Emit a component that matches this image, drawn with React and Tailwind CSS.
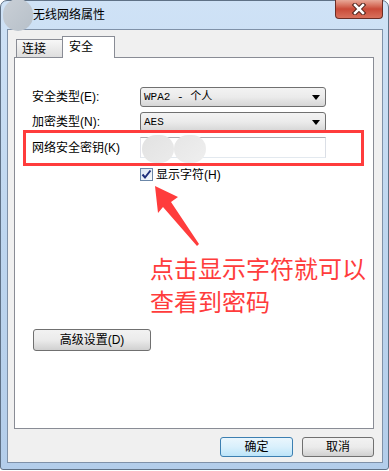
import React from "react";

const Combo = ({ value }) => (
  <div className="h-[20px] w-[186px] rounded-[3px] border border-[#707070] bg-gradient-to-b from-[#f3f3f3] via-[#ebebeb] to-[#d6d6d6] flex items-center pl-[3px] pr-[5px]">
    <span className="font-['Liberation_Mono','Noto_Sans_CJK_SC',monospace] text-[11px] leading-none">{value}</span>
    <div className="ml-auto w-0 h-0 border-l-[4px] border-r-[4px] border-t-[5px] border-l-transparent border-r-transparent border-t-black" />
  </div>
);

const WinButton = ({ children, className = "", primary = false }) => (
  <div
    className={
      "h-[20px] rounded-[3px] border flex items-center justify-center text-[12px] " +
      (primary
        ? "border-[#3c7fb1] bg-gradient-to-b from-[#eaf6fd] via-[#d9f0fc] to-[#bce4f9] "
        : "border-[#707070] bg-gradient-to-b from-[#f2f2f2] via-[#ebebeb] to-[#d0d0d0] ") +
      className
    }
  >
    {children}
  </div>
);

export default function App() {
  return (
    <div className="w-[389px] h-[471px] bg-white relative overflow-hidden font-['Liberation_Sans','Noto_Sans_CJK_SC',sans-serif] text-[12px] text-black">
      <div className="w-[389px] h-[470px] rounded-t-[7px] rounded-b-[3px] border border-[#5f7186] bg-gradient-to-b from-[#cfe2f6] via-[#bed6ef] to-[#b3cdea] flex flex-col">
        {/* title bar */}
        <div className="h-[28px] shrink-0 flex items-center pl-[32px]">
          <span className="leading-none">无线网络属性</span>
        </div>

        {/* client area */}
        <div className="ml-[6px] mr-[5px] h-[434px] border border-[#7f91a8] bg-[#f0f0f0] flex flex-col pt-[6px] pl-[6px] pr-[8px]">
          {/* tabs */}
          <div className="h-[21px] ml-[2px] flex items-end">
            <div className="h-[18px] w-[46px] border border-b-0 border-r-0 border-[#898c95] bg-gradient-to-b from-[#f7f7f7] to-[#dedede] flex items-center pl-[5px]">
              连接
            </div>
            <div className="h-[22px] w-[53px] -mb-px relative z-10 bg-white border border-b-0 border-[#898c95] flex items-center pl-[6px] pb-[1px]">
              安全
            </div>
          </div>

          {/* tab page */}
          <div className="h-[372px] border border-[#898c95] bg-white flex flex-col pt-[29px] pl-[17px]">
            <div className="flex items-center h-[20px]">
              <span className="w-[108px]">安全类型(E):</span>
              <Combo value="WPA2 - 个人" />
            </div>
            <div className="flex items-center h-[20px] mt-[5px]">
              <span className="w-[108px]">加密类型(N):</span>
              <Combo value="AES" />
            </div>
            <div className="flex items-center h-[21px] mt-[5px]">
              <span className="w-[108px]">网络安全密钥(K)</span>
              <div className="h-[21px] w-[186px] border border-[#abadb3] border-l-[#e2e3ea] border-r-[#dbdfe6] border-b-[#e3e9ef] bg-white" />
            </div>
            <div className="flex items-center h-[13px] mt-[10px] pl-[108px]">
              <div className="w-[13px] h-[13px] border border-[#6b87a8] bg-gradient-to-br from-[#dce6f2] to-[#f7fafd] flex items-center justify-center">
                <svg width="11" height="11" viewBox="0 0 11 11">
                  <path d="M1.5 5.5 L4 8.5 L9.5 1.5" fill="none" stroke="#1f2f7a" strokeWidth="2" />
                </svg>
              </div>
              <span className="ml-[3px]">显示字符(H)</span>
            </div>
            <WinButton className="w-[118px] h-[22px] mt-[148px] ml-[1px]">高级设置(D)</WinButton>
          </div>

          {/* dialog buttons */}
          <div className="mt-[8px] flex justify-end gap-[9px]">
            <WinButton primary className="w-[73px]">确定</WinButton>
            <WinButton className="w-[72px]">取消</WinButton>
          </div>
        </div>
      </div>

      {/* blurred app icon */}
      <div className="absolute left-[3px] top-[-1px] w-[30px] h-[32px] rounded-full bg-gradient-to-br from-[#c9cfd6] to-[#b7c0c9]" />

      {/* close button */}
      <div className="absolute left-[335px] top-0 w-[48px] h-[19px] rounded-b-[4px] border border-t-0 border-[#6b2d25] bg-gradient-to-b from-[#e8a898] via-[#c94a38] to-[#d8705c] flex items-center justify-center">
        <svg width="16" height="12" viewBox="0 0 16 12">
          <path d="M4 2 L12 10 M12 2 L4 10" stroke="#4a2019" strokeWidth="4.5" strokeLinecap="square" />
          <path d="M4 2 L12 10 M12 2 L4 10" stroke="#ffffff" strokeWidth="2.5" strokeLinecap="square" />
        </svg>
      </div>

      {/* masked key */}
      <div className="absolute left-[142px] top-[135px] w-[32px] h-[28px] rounded-full bg-gradient-to-br from-[#e2e2e2] to-[#ebebeb]" />
      <div className="absolute left-[174px] top-[135px] w-[32px] h-[28px] rounded-full bg-gradient-to-br from-[#e6e6e6] to-[#efefef]" />

      {/* annotation */}
      <div className="absolute left-[23px] top-[130px] w-[341px] h-[36px] border-[3px] border-[#ff3c3c]" />
      <svg className="absolute left-[150px] top-[182px]" width="55" height="70" viewBox="150 182 55 70">
        <polygon
          points="155,186 178,197 171,202 199,244 197,246 163,207 158,213"
          fill="#ff3c3c"
        />
      </svg>
      <div className="absolute left-[150px] top-[251px] font-['Noto_Sans_CJK_SC',sans-serif] text-[24px] leading-[33px] text-[#ff3c3c]">
        <div>点击显示字符就可以</div>
        <div>查看到密码</div>
      </div>
    </div>
  );
}
